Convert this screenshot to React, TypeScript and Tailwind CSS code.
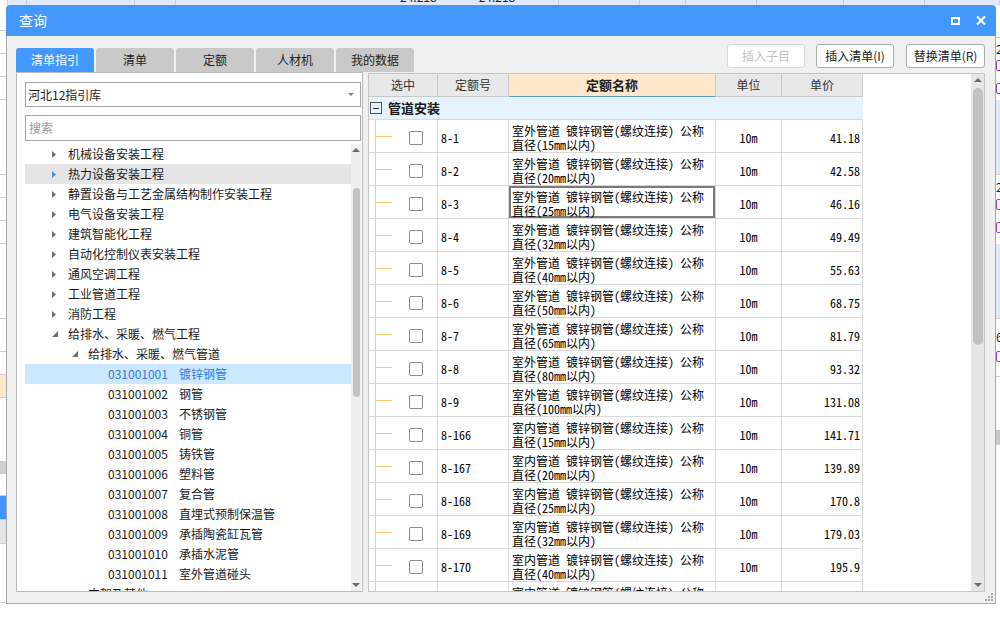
import React from "react";

type TreeRow = {
  level: 1 | 2 | 3;
  text: string;
  code?: string;
  open?: boolean;
  hover?: boolean;
  selected?: boolean;
};

const tree: TreeRow[] = [
  { level: 1, text: "机械设备安装工程" },
  { level: 1, text: "热力设备安装工程", hover: true },
  { level: 1, text: "静置设备与工艺金属结构制作安装工程" },
  { level: 1, text: "电气设备安装工程" },
  { level: 1, text: "建筑智能化工程" },
  { level: 1, text: "自动化控制仪表安装工程" },
  { level: 1, text: "通风空调工程" },
  { level: 1, text: "工业管道工程" },
  { level: 1, text: "消防工程" },
  { level: 1, text: "给排水、采暖、燃气工程", open: true },
  { level: 2, text: "给排水、采暖、燃气管道", open: true },
  { level: 3, code: "031001001", text: "镀锌钢管", selected: true },
  { level: 3, code: "031001002", text: "钢管" },
  { level: 3, code: "031001003", text: "不锈钢管" },
  { level: 3, code: "031001004", text: "铜管" },
  { level: 3, code: "031001005", text: "铸铁管" },
  { level: 3, code: "031001006", text: "塑料管" },
  { level: 3, code: "031001007", text: "复合管" },
  { level: 3, code: "031001008", text: "直埋式预制保温管" },
  { level: 3, code: "031001009", text: "承插陶瓷缸瓦管" },
  { level: 3, code: "031001010", text: "承插水泥管" },
  { level: 3, code: "031001011", text: "室外管道碰头" },
  { level: 2, text: "支架及其他" },
];

const indent = { 1: "pl-[27px]", 2: "pl-[47px]", 3: "pl-[83px]" } as const;

// [定额号, 室内/室外, 管径, 单价]
const items = [
  ["8-1", "室外", "15", "41.18"],
  ["8-2", "室外", "20", "42.58"],
  ["8-3", "室外", "25", "46.16"],
  ["8-4", "室外", "32", "49.49"],
  ["8-5", "室外", "40", "55.63"],
  ["8-6", "室外", "50", "68.75"],
  ["8-7", "室外", "65", "81.79"],
  ["8-8", "室外", "80", "93.32"],
  ["8-9", "室外", "100", "131.08"],
  ["8-166", "室内", "15", "141.71"],
  ["8-167", "室内", "20", "139.89"],
  ["8-168", "室内", "25", "170.8"],
  ["8-169", "室内", "32", "179.03"],
  ["8-170", "室内", "40", "195.9"],
  ["8-171", "室内", "50", "249.52"],
];

const topCells = [8, 19, 108, 41, 383, 81, 46, 71, 87, 81, 75];

const leftStrip = [
  { h: 26, bg: "bg-white" },
  { h: 23, bg: "bg-white" },
  { h: 23, bg: "bg-white" },
  { h: 23, bg: "bg-white" },
  { h: 75, bg: "bg-white" },
  { h: 23, bg: "bg-white" },
  { h: 23, bg: "bg-white" },
  { h: 23, bg: "bg-white" },
  { h: 75, bg: "bg-white" },
  { h: 33, bg: "bg-white" },
  { h: 23, bg: "bg-white" },
  { h: 23, bg: "bg-[#fde8cc]" },
  { h: 64, bg: "bg-white" },
  { h: 12, bg: "bg-[#cfcfcf]" },
  { h: 22, bg: "bg-white" },
  { h: 24, bg: "bg-[#3f97fd]" },
  { h: 24, bg: "bg-[#e4e4e4]" },
  { h: 59, bg: "bg-white" },
];

function Caret({ open, blue }: { open?: boolean; blue?: boolean }) {
  if (open) {
    return (
      <svg width="6" height="6" viewBox="0 0 6 6">
        <path d="M6 0V6H0Z" fill="#707070" />
      </svg>
    );
  }
  return (
    <svg width="4" height="7" viewBox="0 0 4 7">
      <path d="M0 0L4 3.5L0 7Z" fill={blue ? "#3b8ff0" : "#707070"} />
    </svg>
  );
}

function Up() {
  return (
    <svg width="8" height="4" viewBox="0 0 8 4">
      <path d="M0 4L4 0L8 4Z" fill="#6a6a6a" />
    </svg>
  );
}

function Down() {
  return (
    <svg width="8" height="4" viewBox="0 0 8 4">
      <path d="M0 0L4 4L8 0Z" fill="#6a6a6a" />
    </svg>
  );
}

function Dialog() {
  return (
    <div className="flex h-[599px] w-[990px] shrink-0 flex-col">
      <div className="flex h-[31px] shrink-0 items-center rounded-t-[4px] bg-[#4298fe] pl-[13px] pr-[10px] text-[14px] text-white">
        <span>查询</span>
        <div className="ml-auto flex items-center gap-[16px]">
          <div className="h-[8px] w-[9px] border-2 border-white" />
          <svg width="10" height="9" viewBox="0 0 10 9">
            <path d="M1 0.5L9 8.5M9 0.5L1 8.5" stroke="white" strokeWidth="2.2" />
          </svg>
        </div>
      </div>

      <div className="relative flex min-h-0 flex-1 gap-[5px] border-x border-b border-[#a9a9a9] bg-[#f0f0f0] pb-[11px] pl-[9px] pr-[10px] pt-[8px]">
        {/* left column */}
        <div className="flex w-[347px] shrink-0 flex-col pt-[4px]">
          <div className="flex h-[24px] shrink-0 gap-[2px]">
            {["清单指引", "清单", "定额", "人材机", "我的数据"].map((t, i) => (
              <div
                key={t}
                className={`w-[78px] shrink-0 rounded-t-[3px] text-center leading-[24px] ${
                  i === 0 ? "bg-[#4298fe] text-white" : "bg-[#c9c9c9] text-[#222]"
                }`}
              >
                {t}
              </div>
            ))}
          </div>
          <div className="flex min-h-0 flex-1 flex-col border border-[#b9b9b9] bg-white pl-[8px] pr-[1px] pt-[9px]">
            <div className="flex h-[25px] shrink-0 items-center border border-[#a6a6a6] pl-[2px] pr-[6px]">
              <span>河北12指引库</span>
              <svg className="ml-auto" width="6" height="3" viewBox="0 0 6 3">
                <path d="M0 0L3 3L6 0Z" fill="#808080" />
              </svg>
            </div>
            <div className="mt-[8px] flex h-[26px] shrink-0 items-center border border-[#a6a6a6] pl-[3px] text-[#9a9a9a]">
              搜索
            </div>
            <div className="mt-[3px] flex min-h-0 flex-1">
              <div className="flex min-w-0 flex-1 flex-col overflow-hidden text-[#1a1a1a]">
                {tree.map((r, i) => (
                  <div
                    key={i}
                    className={`flex h-[20px] shrink-0 items-center whitespace-nowrap ${indent[r.level]} ${
                      r.hover ? "bg-[#e5e5e5]" : ""
                    } ${r.selected ? "bg-[#cce8ff] text-[#2f7bd9]" : ""}`}
                  >
                    {r.level < 3 && (
                      <span className="flex w-[16px] items-center">
                        <Caret open={r.open} blue={r.hover} />
                      </span>
                    )}
                    {r.code && <span className="w-[71px]">{r.code}</span>}
                    <span>{r.text}</span>
                  </div>
                ))}
              </div>
              <div className="flex w-[10px] shrink-0 flex-col items-center bg-[#efefef] pb-[4px] pt-[4px]">
                <Up />
                <div className="mt-[36px] h-[209px] w-[7px] rounded-full bg-[#c2c2c2]" />
                <div className="flex-1" />
                <Down />
              </div>
            </div>
          </div>
        </div>

        {/* right column */}
        <div className="flex w-[617px] shrink-0 flex-col">
          <div className="flex h-[24px] shrink-0 justify-end">
            <div className="w-[78px] rounded-[3px] border border-[#dadada] bg-white text-center leading-[22px] text-[#c2c2c2]">
              插入子目
            </div>
            <div className="ml-[11px] w-[78px] rounded-[3px] border border-[#adadad] bg-white text-center leading-[22px] text-[#222]">
              插入清单(I)
            </div>
            <div className="ml-[12px] w-[79px] rounded-[3px] border border-[#adadad] bg-white text-center leading-[22px] text-[#222]">
              替换清单(R)
            </div>
          </div>
          <div className="mt-[5px] flex min-h-0 flex-1 border border-[#c6c6c6] bg-white">
            <div className="flex min-w-0 flex-1 flex-col overflow-hidden">
              <div className="grid h-[23px] w-[494px] shrink-0 grid-cols-[69px_71px_207px_66px_81px] text-[#333]">
                <div className="flex items-center justify-center border-b border-r border-[#c9c9c9] bg-[#e8e8e8]">选中</div>
                <div className="flex items-center justify-center border-b border-r border-[#c9c9c9] bg-[#e8e8e8]">定额号</div>
                <div className="flex items-center justify-center border-b border-r border-b-[#5b9bd5] border-r-[#c9c9c9] bg-[#ffe7cb] text-[13px] font-bold text-[#222]">
                  定额名称
                </div>
                <div className="flex items-center justify-center border-b border-r border-[#c9c9c9] bg-[#e8e8e8]">单位</div>
                <div className="flex items-center justify-center border-b border-r border-[#c9c9c9] bg-[#e8e8e8]">单价</div>
              </div>
              <div className="flex h-[23px] w-[494px] shrink-0 items-center border-b border-[#d9d9d9] bg-[#e5f3ff] pl-[1px]">
                <div className="flex h-[12px] w-[12px] items-center justify-center border border-[#555]">
                  <div className="h-px w-[6px] bg-[#333]" />
                </div>
                <span className="ml-[6px] text-[13px] font-bold text-[#1a1a1a]">管道安装</span>
              </div>
              {items.map(([code, place, size, price], i) => (
                <div
                  key={code}
                  className="grid h-[33px] w-[494px] shrink-0 grid-cols-[69px_71px_207px_66px_81px] font-['Noto_Sans_Mono_CJK_SC','Noto_Sans_CJK_SC',monospace] text-black"
                >
                  <div className="flex items-stretch border-b border-r border-[#d9d9d9]">
                    <div className="ml-[6px] w-px shrink-0 bg-[#fcc977]" />
                    <div className="flex w-[16px] shrink-0 items-center">
                      <div className="h-px w-[16px] bg-[#fcc977]" />
                    </div>
                    <div className="ml-[17px] mt-[3px] h-[14px] w-[14px] shrink-0 self-center rounded-[2px] border border-[#8c8c8c] bg-white" />
                  </div>
                  <div className="flex items-center border-b border-r border-[#d9d9d9] pl-[3px] pt-[4px]">{code}</div>
                  <div
                    className={`border-b border-r border-[#d9d9d9] pl-[3px] pt-[4px] leading-[14px] ${
                      i === 2 ? "shadow-[inset_0_0_0_2px_#7b7b7b]" : ""
                    }`}
                  >
                    <div className="whitespace-nowrap">{place}管道 镀锌钢管(螺纹连接) 公称</div>
                    <div className="whitespace-nowrap">直径({size}mm以内)</div>
                  </div>
                  <div className="flex items-center justify-center border-b border-r border-[#d9d9d9] pt-[4px]">10m</div>
                  <div className="flex items-center justify-end border-b border-r border-[#d9d9d9] pr-[2px] pt-[4px]">{price}</div>
                </div>
              ))}
            </div>
            <div className="flex w-[13px] shrink-0 flex-col items-center bg-[#e6e6e6] pb-[4px] pt-[4px]">
              <Up />
              <div className="mt-[6px] h-[257px] w-[10px] rounded-full bg-[#c1c1c1]" />
              <div className="flex-1" />
              <Down />
            </div>
          </div>
        </div>

        {/* resize grip */}
        <svg className="absolute bottom-[2px] right-[2px]" width="9" height="9" viewBox="0 0 9 9">
          <rect x="7" y="1" width="2" height="2" fill="#a8a8a8" />
          <rect x="4" y="4" width="2" height="2" fill="#a8a8a8" />
          <rect x="7" y="4" width="2" height="2" fill="#a8a8a8" />
          <rect x="1" y="7" width="2" height="2" fill="#a8a8a8" />
          <rect x="4" y="7" width="2" height="2" fill="#a8a8a8" />
          <rect x="7" y="7" width="2" height="2" fill="#a8a8a8" />
        </svg>
      </div>
    </div>
  );
}

export default function App() {
  return (
    <div className="flex h-[628px] w-[1000px] flex-col overflow-hidden bg-white font-['Noto_Sans_CJK_SC',sans-serif] text-[12px] text-[#1e1e1e]">
      {/* background sheet, top sliver */}
      <div className="flex h-[5px] shrink-0 overflow-hidden">
        {topCells.map((w, i) => (
          <div
            key={i}
            style={{ width: w }}
            className={`h-full shrink-0 border-r border-[#c3cfdf] ${i === 0 ? "bg-white" : "bg-[#dfe9f8]"}`}
          >
            {i === 4 && (
              <div className="-mt-[9px] flex whitespace-nowrap leading-[12px] text-[#222]">
                <span className="ml-[224px]">24.218</span>
                <span className="ml-[42px]">24.218</span>
              </div>
            )}
          </div>
        ))}
      </div>
      <div className="flex shrink-0">
        <div className="flex w-[6px] shrink-0 flex-col">
          {leftStrip.map((s, i) => (
            <div key={i} style={{ height: s.h }} className={`shrink-0 border-b border-[#cfcfcf] ${s.bg}`} />
          ))}
        </div>
        <Dialog />
        <div className="flex w-[4px] shrink-0 flex-col overflow-hidden text-[12px] leading-[14px]">
          <div className="h-[32px] shrink-0 bg-white" />
          <div className="h-[63px] shrink-0 border-t border-[#d0d0d0] bg-white">
            <div className="mt-[4px] whitespace-nowrap">2</div>
            <div className="mt-[4px] h-[11px] w-[8px] rounded-[2px] border border-[#a33bc8]" />
            <div className="mt-[12px] h-[11px] w-[8px] rounded-[2px] border border-[#a33bc8]" />
          </div>
          <div className="h-[74px] shrink-0 bg-[#e0ebfa]" />
          <div className="h-[70px] shrink-0 border-t border-[#d0d0d0] bg-white">
            <div className="mt-[5px] whitespace-nowrap">2</div>
            <div className="mt-[5px] h-[11px] w-[8px] rounded-[2px] border border-[#a33bc8]" />
            <div className="mt-[12px] h-[11px] w-[8px] rounded-[2px] border border-[#a33bc8]" />
          </div>
          <div className="h-[74px] shrink-0 bg-[#e0ebfa]" />
          <div className="h-[58px] shrink-0 border-t border-[#d0d0d0] bg-white">
            <div className="mt-[11px] whitespace-nowrap">6</div>
            <div className="mt-[7px] h-[11px] w-[8px] rounded-[2px] border border-[#a33bc8]" />
          </div>
          <div className="h-[54px] shrink-0 border-t border-[#d0d0d0] bg-white" />
          <div className="h-[14px] shrink-0 bg-[#c8c8c8]" />
          <div className="flex-1 border-t border-[#d0d0d0] bg-white" />
        </div>
      </div>
      <div className="flex-1 bg-white" />
    </div>
  );
}
